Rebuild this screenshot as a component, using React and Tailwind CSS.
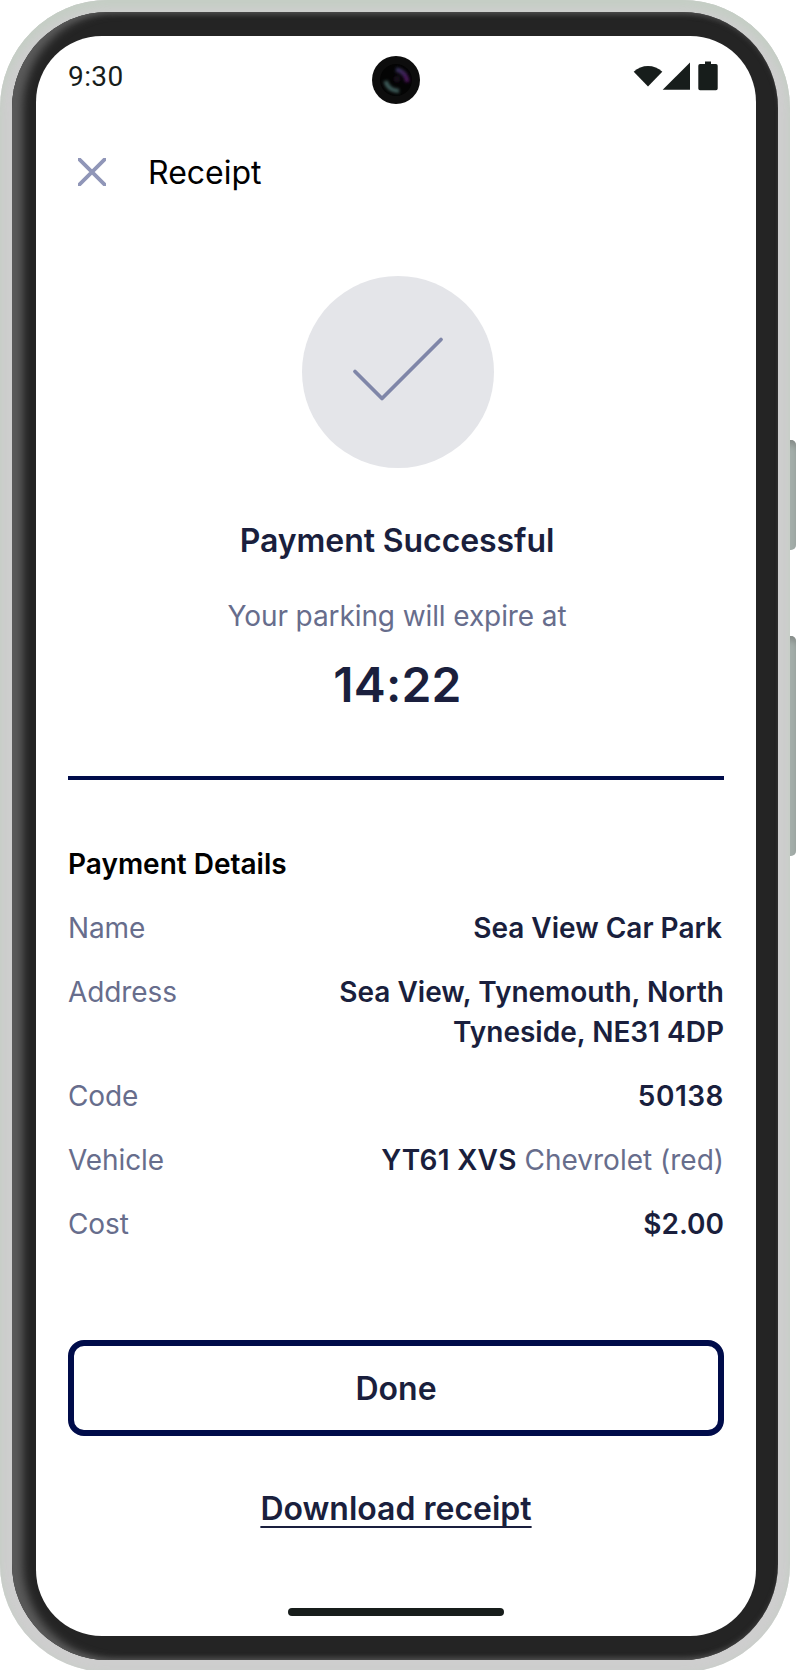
const details = [
  { label: "Name", value: "Sea View Car Park", inset: true },
  { label: "Address", value: "Sea View, Tynemouth, North Tyneside, NE31 4DP" },
  { label: "Code", value: "50138", wide: true },
  { label: "Vehicle", value: "YT61 XVS", note: "Chevrolet (red)" },
  { label: "Cost", value: "$2.00" },
];

function StatusBar() {
  return (
    <div className="relative flex h-[88px] items-start justify-between">
      <span className="mt-6 font-[Roboto,sans-serif] text-[28px] leading-[34px] tracking-[0.4px] text-[#171d1b]">9:30</span>
      <span className="absolute top-5 left-[304px] size-12">
        <Camera />
      </span>
      <svg className="mt-6 mr-1.5 h-8 w-[86px]" viewBox="632 60 86 32" fill="#171d1b">
        <path d="M633.700 71.700C641.500 64.200 654.500 64.200 662.300 71.700L648 86.500Z" />
        <path d="M690 62.500V89.700H662.700Z" />
        <path d="M705 61.500h6v2.500h5q1.700 0 1.700 1.700v22.800q0 1.700-1.700 1.700h-16q-1.700 0-1.700-1.700v-22.800q0-1.700 1.700-1.700h5z" />
      </svg>
    </div>
  );
}

function Camera() {
  return (
    <svg className="size-12" viewBox="0 0 48 48" fill="none">
      <defs>
        <filter id="glow" x="-50%" y="-50%" width="200%" height="200%">
          <feGaussianBlur stdDeviation="1.600" />
        </filter>
        <linearGradient id="violet" x1="24" y1="13" x2="37" y2="26" gradientUnits="userSpaceOnUse">
          <stop stopColor="#34365c" />
          <stop offset="1" stopColor="#4d0d58" />
        </linearGradient>
      </defs>
      <circle cx="24" cy="24" r="24" fill="#0d0d0d" />
      <circle cx="24" cy="24" r="16" fill="#040404" />
      <g filter="url(#glow)" strokeWidth="4.500">
        <path d="M24 13.500Q34 15.500 35.500 26" stroke="url(#violet)" />
        <path d="M13.500 25Q16 34.500 27 35" stroke="#3c5a58" />
        <circle cx="25" cy="23" r="3" fill="#15101c" />
      </g>
    </svg>
  );
}

function Header() {
  return (
    <header className="flex h-24 items-center">
      <button className="flex size-12 items-center justify-center" aria-label="Close">
        <svg className="size-7" viewBox="0 0 28 28" stroke="#9096b8" strokeWidth="3.800">
          <path d="M0 0L28 28M28 0L0 28" />
        </svg>
      </button>
      <h1 className="ml-8 pt-0.5 text-[32px] leading-10 text-black">Receipt</h1>
    </header>
  );
}

function Confirmation() {
  return (
    <section className="flex h-[560px] flex-col items-center border-b-4 border-[#000c4a] pt-14 pl-0.5 text-center">
      <div className="ml-0.5 flex size-48 items-center justify-center rounded-full bg-[#e4e5e9]">
        <svg className="size-48" viewBox="0 0 192 192" fill="none" stroke="#7f86a8" strokeWidth="3.800" strokeLinecap="round" strokeLinejoin="round">
          <path d="M53 95.500L80 122.500L139 63.500" />
        </svg>
      </div>
      <h2 className="mt-[53px] text-[32px] leading-10 font-semibold tracking-[-0.08px]">Payment Successful</h2>
      <p className="mt-[35px] text-[28px] leading-10 tracking-[-0.1px] text-[#676d8c]">Your parking will expire at</p>
      <p className="mt-[21px] ml-px text-[48px] leading-14 font-semibold tracking-[0.2px]">14:22</p>
    </section>
  );
}

function Details() {
  return (
    <section className="mt-16 text-[28px] leading-10">
      <h3 className="font-semibold text-black">Payment Details</h3>
      <dl className="mt-6 flex flex-col gap-6">
        {details.map(({ label, value, note, inset, wide }) => (
          <div key={label} className="flex justify-between">
            <dt className="tracking-[-0.1px] text-[#676d8c]">{label}</dt>
            <dd className={inset ? "mr-0.5 max-w-[400px] text-right font-semibold" : "max-w-[400px] text-right font-semibold"}>
              <span className={wide ? "tracking-[0.5px]" : note ? "tracking-[0.25px]" : ""}>{value}</span>
              {note && <span className="font-normal text-[#676d8c]"> {note}</span>}
            </dd>
          </div>
        ))}
      </dl>
    </section>
  );
}

export default function App() {
  return (
    <div className="relative h-[1670px] w-[796px] overflow-hidden bg-white font-[Inter,sans-serif] text-[#1a1f3d]">
      <span className="absolute top-[440px] left-[784px] h-[110px] w-3 rounded-[5px] bg-[#a4aeaa] shadow-[inset_0_6px_6px_-2px_#858b88]" />
      <span className="absolute top-[636px] left-[784px] h-[220px] w-3 rounded-[5px] bg-[#a4aeaa] shadow-[inset_0_6px_6px_-2px_#858b88]" />
      <div className="relative h-[1672px] w-[790px] rounded-[108px] bg-[#cecece] p-3 shadow-[inset_0_8px_8px_#c5cec5,inset_0_0_6px_#c8cfc8]">
        <div className="h-[1648px] w-[766px] rounded-[96px] bg-[#242424] pt-6 pl-6 shadow-[inset_12px_0_8px_-1px_#5a5a5a,inset_0_4px_5px_-2px_#444,inset_0_-4px_5px_-2px_#444]">
          <main className="flex h-[1600px] w-[720px] flex-col rounded-[66px] bg-white px-8">
            <StatusBar />
            <Header />
            <Confirmation />
            <Details />
            <button className="mt-24 h-24 shrink-0 rounded-[16px] border-[6px] border-[#000c4a] pt-0.5 text-[32px] leading-10 font-semibold">Done</button>
            <a className="mt-[53px] self-center text-[32px] leading-10 font-semibold underline decoration-[1.700px] underline-offset-[6px] [text-decoration-skip-ink:none]">
              Download receipt
            </a>
            <span className="mt-auto mb-5 h-2 w-[216px] self-center rounded-full bg-[#171d1b]" />
          </main>
        </div>
      </div>
    </div>
  );
}
